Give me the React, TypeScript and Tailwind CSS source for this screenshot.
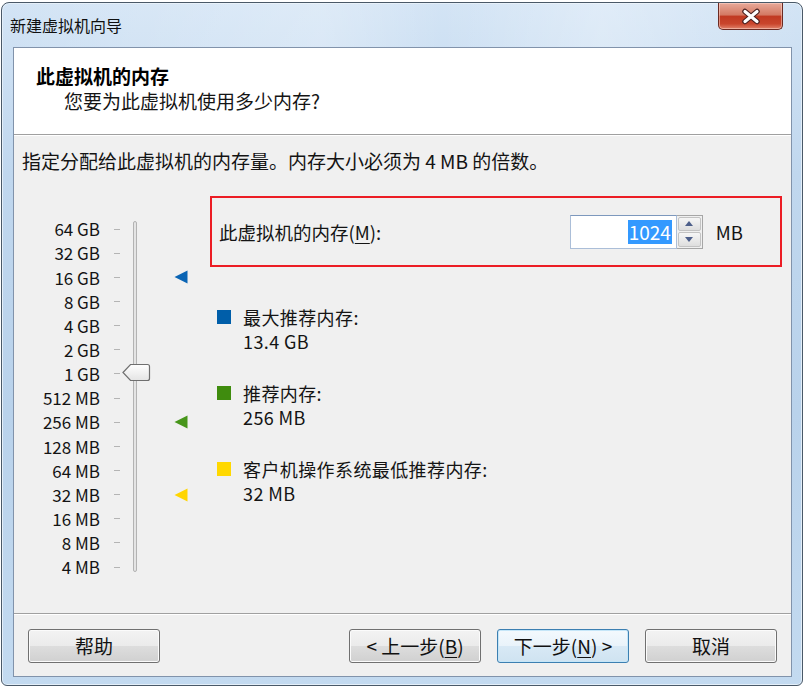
import React from "react";

const labels = [
  "64 GB", "32 GB", "16 GB", "8 GB", "4 GB", "2 GB", "1 GB",
  "512 MB", "256 MB", "128 MB", "64 MB", "32 MB", "16 MB", "8 MB", "4 MB",
];
const tris: Record<number, string> = { 2: "#0a64b4", 8: "#47951a", 11: "#ffd500" };

function Tri({ color }: { color: string }) {
  return (
    <svg width="14" height="14" viewBox="0 0 14 14">
      <path d="M0.5 7 L13.5 0.5 V13.5 Z" fill={color} />
    </svg>
  );
}

function Thumb() {
  return (
    <svg width="29" height="19" viewBox="0 0 29 19">
      <defs>
        <linearGradient id="tg" x1="0" y1="0" x2="0" y2="1">
          <stop offset="0" stopColor="#ffffff" />
          <stop offset="1" stopColor="#e4e4e4" />
        </linearGradient>
      </defs>
      <path
        d="M1 9.5 L8.5 1.5 H25.5 Q27.5 1.5 27.5 3.5 V15.5 Q27.5 17.5 25.5 17.5 H8.5 Z"
        fill="url(#tg)"
        stroke="#6f6f6f"
        strokeWidth="1.2"
      />
    </svg>
  );
}

function Btn({ children, def }: { children: React.ReactNode; def?: boolean }) {
  return (
    <div
      className={
        "w-[132px] h-[34px] rounded-[3px] border flex items-center justify-center text-[19px] text-[#111] " +
        (def
          ? "border-[#3c7fb1] bg-[linear-gradient(#f3f9fd_0%,#e9f3fa_50%,#d8e9f5_51%,#cfe3f1_100%)] shadow-[inset_0_0_0_1px_#c5e6f8]"
          : "border-[#707070] bg-[linear-gradient(#f3f3f3_0%,#ebebeb_50%,#dddddd_51%,#d0d0d0_100%)] shadow-[inset_0_0_0_1px_#fbfbfb]")
      }
    >
      {children}
    </div>
  );
}

export default function App() {
  return (
    <div className="w-[806px] h-[690px] bg-white pt-[2px] pl-[1px] font-['Microsoft_YaHei_UI','Noto_Sans_CJK_SC',sans-serif]">
      <div className="w-[802px] h-[684px] rounded-t-[8px] rounded-b-[6px] border border-[#4a5968] bg-[linear-gradient(180deg,#d3e4f5_0%,#c0d7ee_25%,#b9d2eb_60%,#c3daf0_100%)] flex flex-col shadow-[inset_0_0_0_1px_#e4eff9]">
        {/* Title bar */}
        <div className="h-[44px] flex items-start justify-between bg-[linear-gradient(90deg,rgba(255,255,255,0)_0%,rgba(255,255,255,0.25)_40%,rgba(255,255,255,0)_55%,rgba(255,255,255,0.3)_75%,rgba(255,255,255,0)_100%)]">
          <div className="pl-[8px] pt-[11px] text-[16px] leading-[22px] text-[#101010]">新建虚拟机向导</div>
          <div className="mr-[19px] w-[65px] h-[27px] rounded-b-[5px] border border-t-0 border-[#6b2a22] bg-[linear-gradient(180deg,#e8a999_0%,#d47a64_45%,#c13a22_52%,#c9452c_80%,#e1826a_100%)] flex items-center justify-center shadow-[inset_0_0_0_1px_rgba(255,220,210,0.5)]">
            <svg width="22" height="17" viewBox="0 0 22 17">
              <path d="M5 3.5 L17 13.5 M17 3.5 L5 13.5" stroke="#4a2020" strokeWidth="5.5" strokeLinecap="round" />
              <path d="M5 3.5 L17 13.5 M17 3.5 L5 13.5" stroke="#ffffff" strokeWidth="3.2" strokeLinecap="round" />
            </svg>
          </div>
        </div>
        {/* Client */}
        <div className="flex-1 pl-[11px] pr-[10px] pb-[8px] flex">
          <div className="flex-1 border border-[#8193ab] bg-[#f0f0f0] flex flex-col text-[#141414]">
            {/* Header */}
            <div className="h-[87px] bg-white border-b border-[#a0a0a0] pt-[16px]">
              <div className="pl-[22px] text-[19px] leading-[24px] font-bold text-black">此虚拟机的内存</div>
              <div className="pl-[50px] text-[19px] leading-[26px]">您要为此虚拟机使用多少内存?</div>
            </div>
            <div className="h-[1px] bg-white" />
            {/* Body */}
            <div className="flex-1 flex flex-col">
              <div className="pl-[8px] pt-[13px] text-[19px] leading-[24px]">
                指定分配给此虚拟机的内存量。内存大小必须为 4 MB 的倍数。
              </div>
              <div className="mt-[23px] flex">
                {/* Slider */}
                <div className="pt-[21px] flex">
                  <div className="w-[86px] flex flex-col">
                    {labels.map((l) => (
                      <div key={l} className="h-[24.15px] flex items-center justify-end text-[17px] whitespace-nowrap">
                        {l}
                      </div>
                    ))}
                  </div>
                  <div className="ml-[14px] w-[6px] flex flex-col">
                    {labels.map((l) => (
                      <div key={l} className="h-[24.15px] flex items-center">
                        <div className="w-[6px] h-[1px] bg-[#b4b4b4]" />
                      </div>
                    ))}
                  </div>
                  <div className="ml-[13px] w-[4px] relative pt-[4px] pb-[7px] flex">
                    <div className="flex-1 rounded-[2px] border border-[#b3b3b3] bg-[#e4e4e4]" />
                    <div className="absolute left-[-11px] top-[146px]">
                      <Thumb />
                    </div>
                  </div>
                  <div className="ml-[37px] w-[14px] flex flex-col">
                    {labels.map((l, i) => (
                      <div key={l} className="h-[24.15px] flex items-center">
                        {tris[i] ? <Tri color={tris[i]} /> : null}
                      </div>
                    ))}
                  </div>
                </div>
                {/* Right */}
                <div className="ml-[22px] flex flex-col">
                  <div className="w-[572px] h-[71px] border-2 border-[#ec1c24] flex items-center pl-[7px] pr-[37px]">
                    <div className="text-[18.5px] leading-[24px]">
                      此虚拟机的内存(<span className="underline underline-offset-[3px]">M</span>):
                    </div>
                    <div className="ml-auto flex items-center">
                      <div className="w-[107px] h-[34px] border border-[#abbed8] border-t-[#7d98bd] bg-white flex items-center justify-end pr-[4px]">
                        <span className="bg-[#3399ff] text-white text-[19px] leading-[24px] px-[1px]">1024</span>
                      </div>
                      <div className="w-[26px] h-[34px] border border-[#a6a6a6] border-l-0 flex flex-col">
                        <div className="flex-1 m-[1px] mb-0 rounded-[2px] border border-[#c3c3c3] bg-[linear-gradient(#f6f6f6,#dedede)] flex items-center justify-center">
                          <svg width="8" height="5" viewBox="0 0 8 5"><path d="M0 5 L4 0 L8 5 Z" fill="#4d5f8a" /></svg>
                        </div>
                        <div className="flex-1 m-[1px] rounded-[2px] border border-[#c3c3c3] bg-[linear-gradient(#f6f6f6,#dedede)] flex items-center justify-center">
                          <svg width="8" height="5" viewBox="0 0 8 5"><path d="M0 0 L4 5 L8 0 Z" fill="#4d5f8a" /></svg>
                        </div>
                      </div>
                      <div className="ml-[13px] text-[18.5px] leading-[24px]">MB</div>
                    </div>
                  </div>
                  <div className="mt-[38px] pl-[7px] flex flex-col gap-[28px]">
                    {[
                      { c: "bg-[#005ea9]", t: "最大推荐内存:", v: "13.4 GB" },
                      { c: "bg-[#3f8c0e]", t: "推荐内存:", v: "256 MB" },
                      { c: "bg-[#ffd800]", t: "客户机操作系统最低推荐内存:", v: "32 MB" },
                    ].map((g) => (
                      <div key={g.t} className="flex">
                        <div className="h-[24px] flex items-center">
                          <div className={"w-[14px] h-[14px] " + g.c} />
                        </div>
                        <div className="ml-[12px] text-[18px] leading-[24px] tracking-[0.4px]">
                          <div>{g.t}</div>
                          <div>{g.v}</div>
                        </div>
                      </div>
                    ))}
                  </div>
                </div>
              </div>
            </div>
            {/* Footer */}
            <div className="h-[1px] bg-[#a0a0a0]" />
            <div className="h-[1px] bg-white" />
            <div className="pt-[14px] pb-[13px] px-[14px] flex">
              <Btn>帮助</Btn>
              <div className="ml-auto flex gap-[16px]">
                <Btn>
                  &lt; 上一步(<span className="underline underline-offset-[3px]">B</span>)
                </Btn>
                <Btn def>
                  下一步(<span className="underline underline-offset-[3px]">N</span>) &gt;
                </Btn>
                <Btn>取消</Btn>
              </div>
            </div>
          </div>
        </div>
      </div>
    </div>
  );
}
